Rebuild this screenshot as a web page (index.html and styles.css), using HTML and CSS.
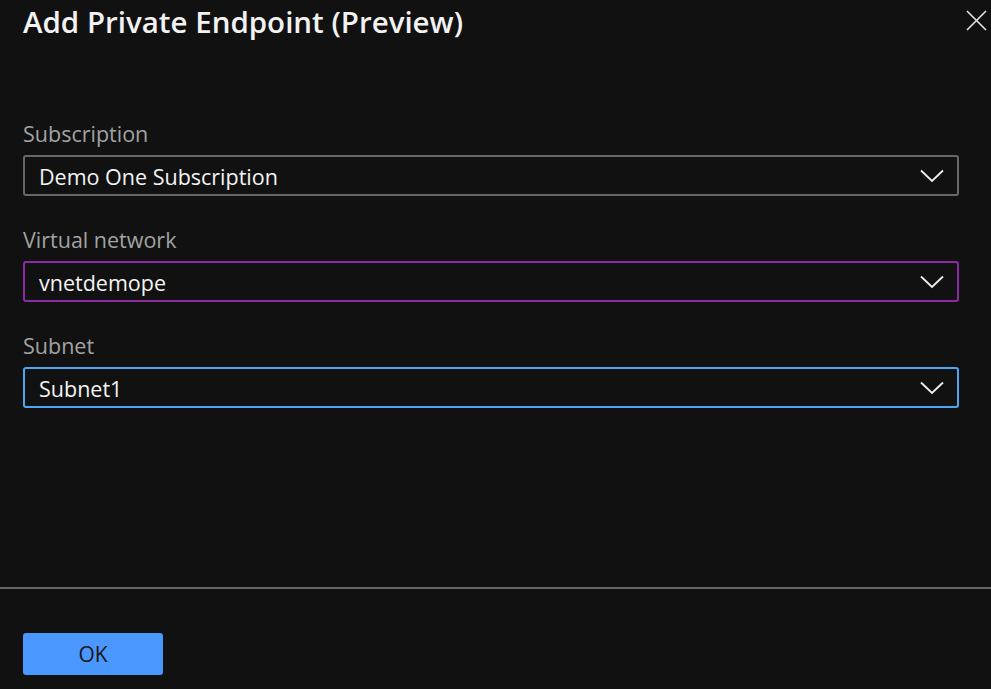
FILE: index.html
```html
<!DOCTYPE html>
<html>
<head>
<meta charset="utf-8">
<link rel="stylesheet" href="styles.css">
</head>
<body>
<div class="panel">
  <header class="head">
    <h1 class="title">Add Private Endpoint (Preview)</h1>
    <button class="close" aria-label="Close">
      <svg width="21" height="21" viewBox="0 0 21 21"><path d="M1 1L20 20M20 1L1 20" stroke="#e6e6e6" stroke-width="1.6" fill="none"/></svg>
    </button>
  </header>
  <main class="form">
    <div class="field">
      <label class="label">Subscription</label>
      <div class="select">
        <span class="value">Demo One Subscription</span>
        <svg class="chev" width="24" height="14" viewBox="0 0 24 14"><path d="M1 1.5L12 12L23 1.5" stroke="#f0f0f0" stroke-width="1.8" fill="none"/></svg>
      </div>
    </div>
    <div class="field">
      <label class="label">Virtual network</label>
      <div class="select hover">
        <span class="value">vnetdemope</span>
        <svg class="chev" width="24" height="14" viewBox="0 0 24 14"><path d="M1 1.5L12 12L23 1.5" stroke="#f0f0f0" stroke-width="1.8" fill="none"/></svg>
      </div>
    </div>
    <div class="field">
      <label class="label">Subnet</label>
      <div class="select focus">
        <span class="value">Subnet1</span>
        <svg class="chev" width="24" height="14" viewBox="0 0 24 14"><path d="M1 1.5L12 12L23 1.5" stroke="#f0f0f0" stroke-width="1.8" fill="none"/></svg>
      </div>
    </div>
  </main>
  <footer class="foot">
    <button class="ok">OK</button>
  </footer>
</div>
</body>
</html>
```
FILE: styles.css
```css
html, body {
  margin: 0;
  padding: 0;
  background: #111111;
}
body {
  font-family: "Open Sans", "Noto Sans", sans-serif;
  color: #f0f0f0;
  width: 991px;
  height: 689px;
  overflow: hidden;
}
.panel {
  display: flex;
  flex-direction: column;
  height: 689px;
}
.head {
  display: flex;
  justify-content: space-between;
  align-items: flex-start;
  padding: 2px 4px 0 23px;
}
.title {
  margin: 0;
  font-size: 29.5px;
  font-weight: 600;
  line-height: 40px;
  color: #f2f2f2;
}
.close {
  background: none;
  border: none;
  padding: 0;
  margin-top: 8px;
  width: 21px;
  height: 21px;
  display: flex;
}
.form {
  flex: 1;
  padding: 78px 32px 0 23px;
  display: flex;
  flex-direction: column;
  gap: 30px;
}
.field {
  display: flex;
  flex-direction: column;
}
.label {
  font-size: 21.5px;
  line-height: 28px;
  color: #a3a3a3;
  margin-bottom: 7px;
}
.select {
  box-sizing: border-box;
  height: 41px;
  border: 2px solid #676767;
  border-radius: 3px;
  display: flex;
  align-items: center;
  justify-content: space-between;
  padding: 0 13px 0 14px;
}
.select.hover { border-color: #8c2ba3; }
.select.focus { border-color: #4ca6f2; }
.value {
  font-size: 21.5px;
  color: #f4f4f4;
  padding-top: 2px;
}
.chev { display: block; }
.foot {
  border-top: 2px solid #666666;
  height: 102px;
  box-sizing: border-box;
  padding: 44px 0 0 23px;
}
.ok {
  width: 140px;
  height: 42px;
  background: #4a97ff;
  border: none;
  border-radius: 3px;
  font-family: "Open Sans", "Noto Sans", sans-serif;
  font-size: 21px;
  color: #161616;
  padding: 0;
}
```
